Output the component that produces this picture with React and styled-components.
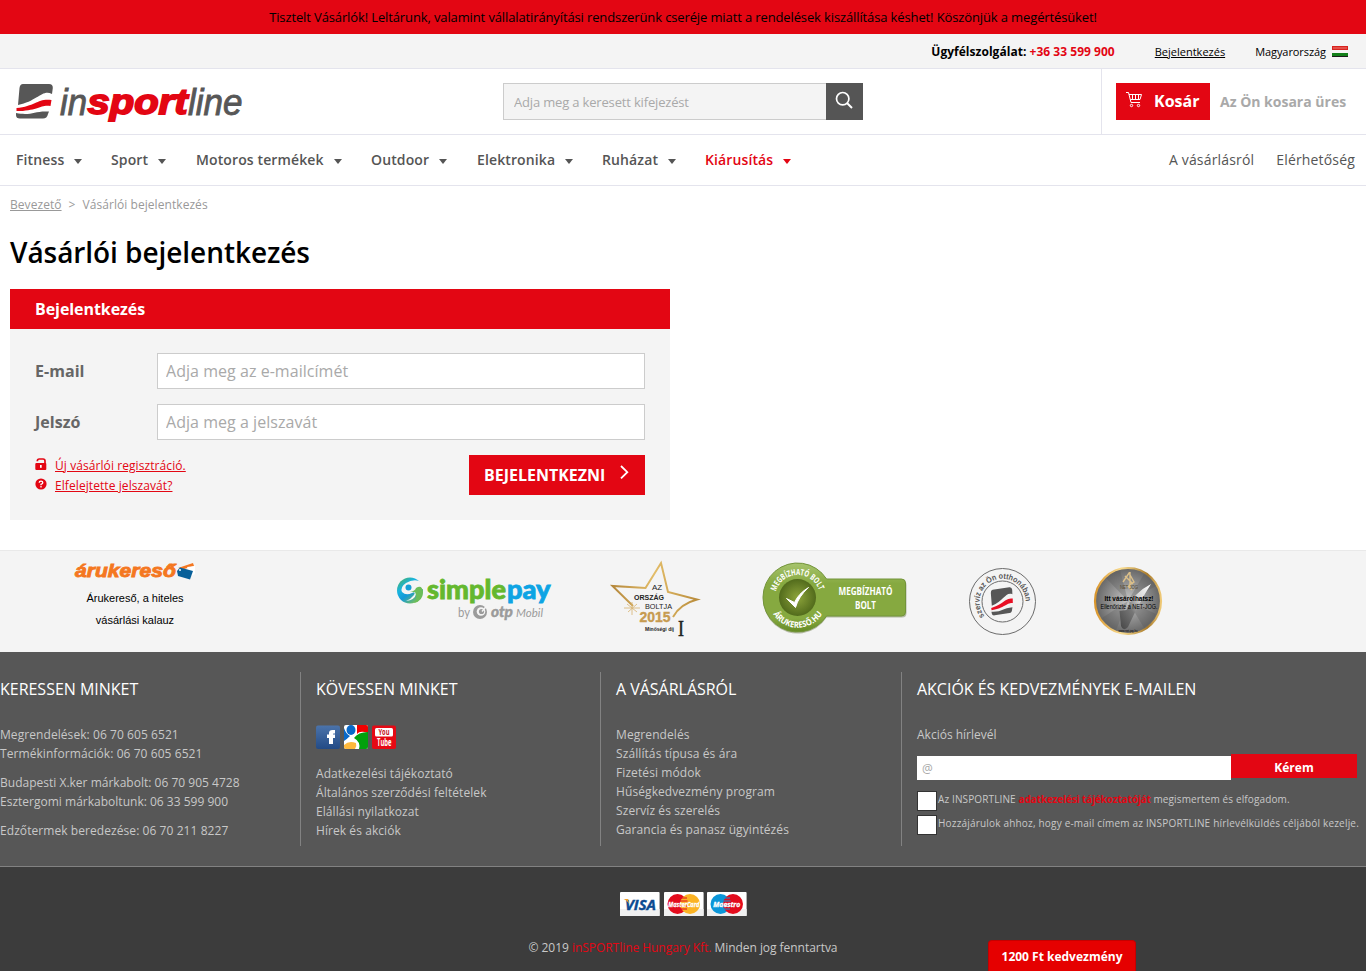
import React from "react";
import styled, { createGlobalStyle } from "styled-components";

const RED = "#e30613";

const Global = createGlobalStyle`
  * { box-sizing: border-box; }
  html, body { margin: 0; padding: 0; }
  body { font-family: "Open Sans", sans-serif; font-size: 12px; color: #000; background: #fff; overflow: hidden; }
  h1, h2, h3, p, ul { margin: 0; padding: 0; font-weight: 400; }
  ul { list-style: none; }
  input { font-family: inherit; border-radius: 0; outline: 0; letter-spacing: inherit; }
  input::placeholder { color: #a9a9a9; opacity: 1; }
  svg { display: block; flex: none; overflow: visible; }
`;

const Page = styled.div`
  position: relative;
  width: 1366px;
  height: 971px;
  overflow: hidden;
  display: flex;
  flex-direction: column;
`;

const Notice = styled.p`
  height: 34px;
  line-height: 34px;
  background: ${RED};
  text-align: center;
  font-size: 13px;
  letter-spacing: -0.122px;
`;

const TopBar = styled.div`
  height: 35px;
  padding-right: 18px;
  display: flex;
  justify-content: flex-end;
  align-items: center;
  background: #f4f4f4;
  border-bottom: 1px solid #e4e4ed;
  font-size: 11px;
`;
const Support = styled.strong`
  font-size: 12px;
  letter-spacing: 0.03px;
  margin-right: 40px;
  span { color: ${RED}; }
`;
const LoginLink = styled.a`
  text-decoration: underline;
  margin-right: 30px;
`;
const Country = styled.span`
  display: flex;
  align-items: center;
  gap: 6px;
  letter-spacing: -0.07px;
`;

const Header = styled.header`
  height: 66px;
  display: flex;
  border-bottom: 1px solid #e4e4ed;
`;
const LogoBox = styled.a`
  width: 503px;
  padding: 13px 0 0 16px;
`;
const Search = styled.form`
  display: flex;
  width: 360px;
  height: 37px;
  margin-top: 14px;
  letter-spacing: -0.17px;
`;
const SearchInput = styled.input`
  flex: 1;
  min-width: 0;
  padding: 0 10px;
  border: 1px solid #ccc;
  border-right: 0;
  background: #f4f4f4;
  font-size: 13px;
`;
const SearchButton = styled.span`
  width: 37px;
  padding: 8px 0 0 9px;
  background: #555;
`;
const CartArea = styled.div`
  width: 265px;
  margin-left: auto;
  padding: 14px 0 0 14px;
  display: flex;
  border-left: 1px solid #e4e4ed;
`;
const CartButton = styled.a`
  width: 94px;
  height: 37px;
  padding-left: 10px;
  display: flex;
  gap: 11px;
  background: ${RED};
  color: #fff;
  font-size: 16px;
  font-weight: 700;
  line-height: 36px;
  svg { margin-top: 8px; }
`;
const CartState = styled.strong`
  margin-left: 10px;
  color: #a9a9a9;
  font-size: 14px;
  line-height: 37px;
`;

const Nav = styled.nav`
  height: 51px;
  padding: 0 11px 2px 16px;
  display: flex;
  align-items: center;
  border-bottom: 1px solid #e4e4ed;
  font-size: 14px;
`;
const NavItem = styled.a`
  width: ${(p) => p.$w}px;
  display: flex;
  align-items: center;
  gap: 10px;
  color: ${(p) => (p.$hot ? RED : "#555")};
  font-weight: 600;
  letter-spacing: 0.12px;
  white-space: nowrap;
  &::after {
    content: "";
    margin-top: 4px;
    border: 4px solid transparent;
    border-top: 5px solid currentColor;
    border-bottom: 0;
  }
`;
const NavSide = styled.div`
  margin-left: auto;
  display: flex;
  gap: 22px;
  color: #555;
  letter-spacing: 0.17px;
`;

const Main = styled.main`
  height: 364px;
  padding: 0 10px;
`;
const Crumbs = styled.div`
  height: 38px;
  line-height: 38px;
  color: #999;
  letter-spacing: 0.06px;
  a { text-decoration: underline; }
  span { margin: 0 7px; }
`;
const Title = styled.h1`
  height: 65px;
  line-height: 56px;
  font-size: 28px;
  font-weight: 600;
  letter-spacing: -0.06px;
`;
const Panel = styled.section`
  width: 660px;
  height: 231px;
  background: #f4f4f4;
`;
const PanelHead = styled.h2`
  height: 40px;
  padding-left: 25px;
  line-height: 40px;
  background: ${RED};
  color: #fff;
  font-size: 16px;
  font-weight: 700;
  letter-spacing: -0.06px;
`;
const PanelBody = styled.div`
  padding: 24px 25px 0;
  display: flex;
  flex-direction: column;
  gap: 15px;
`;
const Field = styled.label`
  display: flex;
  align-items: center;
  height: 36px;
  color: #666;
  font-size: 16px;
  font-weight: 700;
  letter-spacing: 0.04px;
  span { width: 122px; }
`;
const TextInput = styled.input`
  flex: 1;
  height: 36px;
  padding: 0 8px;
  border: 1px solid #ccc;
  background: #fff;
  font-size: 16px;
`;
const Actions = styled.div`
  display: flex;
  justify-content: space-between;
`;
const HelpLinks = styled.ul`
  letter-spacing: 0.08px;
  li { display: flex; gap: 8px; height: 20px; line-height: 21px; color: ${RED}; }
  svg { margin-top: 2.5px; }
  a { text-decoration: underline; }
`;
const Submit = styled.a`
  width: 176px;
  height: 40px;
  padding-left: 15px;
  display: flex;
  gap: 15px;
  background: ${RED};
  color: #fff;
  font-size: 16px;
  font-weight: 700;
  line-height: 40px;
  svg { margin-top: 10px; }
`;

const Trust = styled.section`
  height: 102px;
  display: flex;
  background: #f4f4f4;
  border-top: 1px solid #e9e9e9;
`;
const Slot = styled.div`
  width: ${(p) => p.$w}px;
  padding: ${(p) => p.$top}px 0 0 ${(p) => p.$left || 0}px;
`;
const Guide = styled.p`
  width: 120px;
  margin-top: 6px;
  text-align: center;
  font: 11px/22px "Liberation Sans", sans-serif;
`;

const Footer = styled.footer`
  height: 215px;
  padding-top: 20px;
  display: flex;
  background: #575757;
  border-bottom: 1px solid #828282;
  color: #c8c8c8;
`;
const Column = styled.section`
  width: ${(p) => p.$w}px;
  height: 174px;
  padding-left: ${(p) => (p.$first ? 0 : 15)}px;
  border-left: ${(p) => (p.$first ? "0" : "1px solid #828282")};
  line-height: 19px;
`;
const ColumnTitle = styled.h3`
  height: 53px;
  line-height: 34px;
  color: #fff;
  font-size: 16px;
  letter-spacing: -0.02px;
`;
const Lines = styled.p`
  margin-bottom: 10px;
  white-space: pre-line;
  letter-spacing: ${(p) => p.$track ?? 0.07}px;
`;
const Social = styled.div`
  display: flex;
  gap: 4px;
  margin-bottom: 15px;
`;
const Subscribe = styled.form`
  display: flex;
  height: 26px;
  margin: 10px 0 11px;
`;
const MailInput = styled.input`
  width: 314px;
  height: 24px;
  margin-top: 2px;
  padding: 0 5px;
  border: 0;
  font-size: 12px;
`;
const MailButton = styled.b`
  width: 126px;
  height: 24px;
  line-height: 27px;
  background: ${RED};
  color: #fff;
  text-align: center;
`;
const Consent = styled.label`
  display: flex;
  gap: 1px;
  height: 24px;
  font-size: 10px;
  line-height: 17px;
  letter-spacing: ${(p) => p.$track}px;
  white-space: nowrap;
  b { color: ${RED}; letter-spacing: -0.15px; }
`;
const Box = styled.i`
  width: 20px;
  height: 20px;
  background: #fff;
  border: 1px solid #333;
`;

const Bottom = styled.div`
  flex: 1;
  padding-top: 25px;
  display: flex;
  flex-direction: column;
  align-items: center;
  gap: 22px;
  background: #3c3c3c;
  color: #c8c8c8;
`;
const Cards = styled.div`
  display: flex;
  gap: 4px;
  padding-left: 1px;
`;
const Copyright = styled.p`
  line-height: 20px;
  letter-spacing: -0.04px;
  span { color: ${RED}; }
`;
const Coupon = styled.b`
  position: absolute;
  left: 988px;
  bottom: 0;
  width: 148px;
  height: 31px;
  line-height: 31px;
  border: 1px solid #c40000;
  border-bottom: 0;
  border-radius: 4px 4px 0 0;
  background: #e50000;
  color: #fff;
  text-align: center;
`;

const Wave = ({ accent = RED }) => (
  <g>
    <path d="M7 0H33Q37 0 36.800 4L36 10C26 5 22 17 2 21L3.500 4Q4 0 7 0Z" fill="#575757" />
    <path d="M.500 24C20 22 22 14 35.500 16L34.500 22C25 20 22 27 .500 27Z" fill={accent} />
    <path d="M0 29C16 32 18 26.500 33 27.500L32 30Q31 34.500 27 34.500H4Q0 34.500 0 31Z" fill="#575757" />
  </g>
);

const Logo = () => (
  <svg width="230" height="42" fontFamily="Liberation Sans, sans-serif" fontSize="36.5" fontStyle="italic">
    <g transform="translate(0 2)"><Wave /></g>
    <text x="44" y="32.600" fill="#575757" stroke="#575757" strokeWidth=".9" textLength="27" lengthAdjust="spacingAndGlyphs">in</text>
    <text x="71.500" y="32.300" fill={RED} stroke={RED} strokeWidth="1.8" fontWeight="700" fontSize="35.500" textLength="100" lengthAdjust="spacingAndGlyphs">sport</text>
    <text x="172" y="32.600" fill="#575757" stroke="#575757" strokeWidth=".9" textLength="54.500" lengthAdjust="spacingAndGlyphs">line</text>
  </svg>
);

const Flag = () => (
  <svg width="16" height="11">
    <rect width="16" height="11" fill="#f5f5f5" />
    <rect width="16" height="4" fill="#d8231f" />
    <rect x="1" y="1" width="14" height="2" fill="#e4504a" />
    <rect y="7" width="16" height="4" fill="#14801a" />
    <rect y="10" width="16" height="1" fill="#1c1c1c" />
  </svg>
);

const SearchIcon = () => (
  <svg width="18" height="18" fill="none" stroke="#fff" strokeWidth="1.7">
    <circle cx="7.7" cy="7.7" r="6.2" />
    <path d="M12 12L17 17" strokeWidth="2" />
  </svg>
);

const CartIcon = () => (
  <svg width="17" height="17" fill="none" stroke="#fff" strokeWidth="1">
    <path d="M0 1.500H2.500L5 11.500H14M3 3.500H15.500L14 8.500H4.500M6.500 3.500V8.500M9.500 3.500V8.500M12.500 3.500V8.500" />
    <circle cx="5.500" cy="14.500" r="1.200" />
    <circle cx="12.500" cy="14.500" r="1.200" />
  </svg>
);

const LockIcon = () => (
  <svg width="12" height="13">
    <path d="M2.300 3.200Q2.300 1 4.300 1H8Q10 1 10 3V6" fill="none" stroke={RED} strokeWidth="1.700" />
    <rect x=".300" y="5" width="11" height="7" rx="1" fill={RED} />
    <rect x="5" y="7" width="1.700" height="2.800" fill="#fff" />
  </svg>
);
const HelpIcon = () => (
  <svg width="12" height="13">
    <circle cx="6" cy="6" r="5.600" fill={RED} />
    <path d="M4.200 4.800Q4.200 3.100 6 3.100T7.800 4.700Q7.800 5.700 6 6.300V7.200M6 8.100V9.400" fill="none" stroke="#fff" strokeWidth="1.300" />
  </svg>
);
const ChevronIcon = () => (
  <svg width="9" height="15" fill="none" stroke="#fff" strokeWidth="1.800">
    <path d="M1 1L7.300 7.200L1 13.400" />
  </svg>
);

const Arukereso = () => (
  <svg width="122" height="21">
    <text x="0" y="16.500" fill="#f47721" stroke="#f47721" strokeWidth=".9" fontFamily="Liberation Sans, sans-serif" fontSize="19" fontWeight="700" fontStyle="italic" textLength="101" lengthAdjust="spacingAndGlyphs">árukereső</text>
    <path d="M103 8L118 3L119 6L109 9Z" fill="#f47721" />
    <path d="M112 7L120 6L120 14L116 16Z" fill="#fff" />
    <path d="M105 7.500L118 11L115 19.500L103 16L102 11Z" fill="#075f99" />
    <circle cx="105" cy="10" r="1" fill="#fff" />
  </svg>
);

const SimplePay = () => (
  <svg width="156" height="46" fontFamily="Lato, sans-serif">
    <defs>
      <linearGradient id="sp" x1="0" y1="0" x2=".8" y2="1">
        <stop offset="0" stopColor="#55ad45" />
        <stop offset=".35" stopColor="#19b5df" />
        <stop offset=".6" stopColor="#1299d8" />
        <stop offset="1" stopColor="#8cc63f" />
      </linearGradient>
    </defs>
    <circle cx="14" cy="13.500" r="13" fill="url(#sp)" />
    <path d="M26 5Q18 1 10 6Q4 10 6 15Q10 19 16 16Q20 14 18 18Q15 22 10 24Q19 23 20 17Q21 12 28 12Z" fill="#f4f4f4" />
    <path d="M14 15Q19 14 20 11Q26 7 27 15Q27 24 18 26Q22 21 19 15Z" fill="#6cbd58" />
    <circle cx="12.500" cy="10.500" r="3" fill="#159fd6" />
    <g strokeWidth=".8" fontSize="26.500" fontWeight="900">
      <text x="31" y="21.500" fill="#64b82e" stroke="#64b82e" textLength="79" lengthAdjust="spacingAndGlyphs">simple</text>
      <text x="111" y="21.500" fill="#0da4e4" stroke="#0da4e4" textLength="43.500" lengthAdjust="spacingAndGlyphs">pay</text>
    </g>
    <g fill="#9b9b9b">
      <text x="62" y="39.500" fontSize="12.500" textLength="12" lengthAdjust="spacingAndGlyphs">by</text>
      <circle cx="84" cy="35" r="7" />
      <circle cx="85" cy="34.500" r="4.300" fill="#f4f4f4" />
      <circle cx="85.500" cy="34.500" r="2.600" />
      <path d="M86 34.500L91 28.500" stroke="#f4f4f4" strokeWidth="1.500" />
      <text x="95" y="39.500" fontSize="15" fontWeight="900" fontStyle="italic" stroke="#9b9b9b" strokeWidth=".4" textLength="22" lengthAdjust="spacingAndGlyphs">otp</text>
      <text x="120" y="39.500" fontSize="11.500" fontStyle="italic" textLength="27" lengthAdjust="spacingAndGlyphs">Mobil</text>
    </g>
  </svg>
);

const StarAward = () => (
  <svg width="92" height="78" fontFamily="Liberation Sans, sans-serif" textAnchor="middle">
    <defs>
      <linearGradient id="gold"><stop offset="0" stopColor="#b5883c" /><stop offset=".5" stopColor="#e3bd69" /><stop offset="1" stopColor="#b98c3b" /></linearGradient>
    </defs>
    <path d="M23 46L2.500 26L35.500 28L51 3L58 32L87 39.500Q70 44 63 57" fill="none" stroke="url(#gold)" strokeWidth="2" />
    <path d="M17 44L27 52M18 52L27 44M22 42L22 55M14 48L30 48" stroke="#d7b36e" strokeWidth=".8" />
    <g fill="#222">
      <text x="47" y="30" fontSize="8">AZ</text>
      <text x="39" y="40" fontSize="7.800" fontWeight="700" textLength="30" lengthAdjust="spacingAndGlyphs">ORSZÁG</text>
      <text x="48.500" y="48.500" fontSize="7.800" textLength="27" lengthAdjust="spacingAndGlyphs">BOLTJA</text>
      <text x="45" y="62" fontSize="15" fontWeight="700" fill="#c79b50" stroke="#c79b50" strokeWidth=".4" textLength="31" lengthAdjust="spacingAndGlyphs">2015</text>
      <text x="49.500" y="70.500" fontSize="6" fontWeight="700" textLength="29" lengthAdjust="spacingAndGlyphs">Minőségi díj</text>
      <text x="71" y="76" fontFamily="Liberation Serif, serif" fontSize="23" stroke="#222" strokeWidth=".5" textLength="6" lengthAdjust="spacingAndGlyphs">I</text>
    </g>
  </svg>
);

const TrustedShop = () => (
  <svg width="150" height="78" fontFamily="Open Sans, sans-serif" fontWeight="700" fill="#fff">
    <defs>
      <linearGradient id="green" x1="0" y1="0" x2="0" y2="1"><stop offset="0" stopColor="#a7c46d" /><stop offset=".3" stopColor="#86a940" /><stop offset=".8" stopColor="#86a940" /><stop offset="1" stopColor="#638923" /></linearGradient>
      <radialGradient id="olive"><stop offset="0" stopColor="#8da43b" /><stop offset="1" stopColor="#526b1c" /></radialGradient>
      <path id="ringTop" d="M15 31.400A22.500 22.500 0 0 1 58.500 32" />
      <path id="ringBottom" d="M12 54A29 29 0 0 0 63 51" />
    </defs>
    <path d="M65.600 20.500H141Q145.500 20.500 145.500 25V53Q145.500 57.500 141 57.500H65.600A34.500 34.500 0 1 1 65.600 20.500Z" fill="#8b956f" opacity=".6" />
    <path d="M65.600 19H140.500Q144.500 19 144.500 23V52Q144.500 56 140.500 56H65.600A34.500 34.500 0 1 1 65.600 19Z" fill="url(#green)" stroke="#73943a" />
    <circle cx="36.500" cy="37.500" r="18.500" fill="url(#olive)" />
    <path d="M25.500 38.500L33.500 42.500Q37.500 33.500 47.500 27.500Q37.500 36.500 34.500 47.500Z" stroke="#fff" />
    <text fontSize="8.500"><textPath href="#ringTop" textLength="57" lengthAdjust="spacingAndGlyphs">MEGBÍZHATÓ BOLT</textPath></text>
    <text fontSize="8.500"><textPath href="#ringBottom" textLength="59" lengthAdjust="spacingAndGlyphs">ÁRUKERESŐ.HU</textPath></text>
    <text x="77.500" y="34.500" fontSize="10.500" textLength="54" lengthAdjust="spacingAndGlyphs">MEGBÍZHATÓ</text>
    <text x="94" y="49" fontSize="10.500" textLength="21" lengthAdjust="spacingAndGlyphs">BOLT</text>
  </svg>
);

const HomeService = () => (
  <svg width="70" height="70" fontFamily="Liberation Sans, sans-serif">
    <defs><path id="serviceRing" d="M16.500 49A23 23 0 1 1 57.500 35.500" /></defs>
    <g fill="none" stroke="#6b6b6b"><circle cx="34.500" cy="34.500" r="33" /><circle cx="34.500" cy="34.500" r="20.500" /></g>
    <g transform="translate(22 21.500) rotate(-9 12 13) scale(.65 .74)"><Wave accent="#e80f24" /></g>
    <text fontSize="8" fontWeight="700" fill="#575757"><textPath href="#serviceRing" textLength="87" lengthAdjust="spacingAndGlyphs">szervíz az Ön otthonában</textPath></text>
  </svg>
);

const NetJog = () => (
  <svg width="70" height="71" fontFamily="Liberation Sans, sans-serif" textAnchor="middle">
    <defs>
      <radialGradient id="steel"><stop offset="0" stopColor="#c7c7c7" /><stop offset="1" stopColor="#666" /></radialGradient>
      <linearGradient id="rim"><stop offset="0" stopColor="#d9952b" /><stop offset=".4" stopColor="#f9dc90" /><stop offset=".8" stopColor="#a97b2b" /><stop offset="1" stopColor="#efc977" /></linearGradient>
      <linearGradient id="tick" x1="0" y1="1" x2="1" y2="0"><stop offset="0" stopColor="#444" /><stop offset=".4" stopColor="#777" /><stop offset=".65" stopColor="#d5d5d5" /><stop offset="1" stopColor="#fff" /></linearGradient>
    </defs>
    <circle cx="34" cy="35" r="33" fill="url(#steel)" stroke="url(#rim)" strokeWidth="2.200" />
    <path d="M34 35L12 12A32 32 0 0 1 26 4ZM34 35L50 8A32 32 0 0 1 62 20ZM34 35L8 52A32 32 0 0 0 22 64ZM34 35L62 48A32 32 0 0 1 50 62Z" fill="#555" opacity=".3" />
    <path d="M25.500 45L32.500 44Q39 27 57 18Q46 35 34 61Q29 66 27 60Z" fill="url(#tick)" />
    <path d="M29 16L35 7L40 16L34 20L38 24M31 10L39 18M36 6V22" fill="none" stroke="#dcc08a" strokeWidth="1.400" />
    <text x="35" y="22.500" fontSize="6" fill="#54482e" textLength="18" lengthAdjust="spacingAndGlyphs">NET JOG</text>
    <text x="35" y="35" fontSize="7.800" fontWeight="700" textLength="49" lengthAdjust="spacingAndGlyphs">Itt vásárolhatsz!</text>
    <text x="35" y="43" fontSize="6.800" textLength="57" lengthAdjust="spacingAndGlyphs">Ellenőrizte a NET-JOG.</text>
    <text x="34" y="66" fontSize="3.500" textLength="19" lengthAdjust="spacingAndGlyphs">www.net-jog.hu</text>
  </svg>
);

const Facebook = () => (
  <svg width="24" height="24">
    <defs><linearGradient id="fb" x1="0" y1="0" x2="0" y2="1"><stop offset="0" stopColor="#4b73aa" /><stop offset="1" stopColor="#234b86" /></linearGradient></defs>
    <rect y=".5" width="24" height="23.500" rx="2" fill="url(#fb)" />
    <path d="M13 19V13H11V9.500H13V8Q13 5 16.500 5H19V8.500H17.500Q17 8.500 17 9.500H19V13H17V19Z" fill="#fff" />
  </svg>
);
const Google = () => (
  <svg width="24" height="24">
    <defs><clipPath id="gclip"><rect width="24" height="24" rx="2" /></clipPath></defs>
    <g clipPath="url(#gclip)">
      <rect width="24" height="24" fill="#fff" />
      <path d="M13 0H24V8Q16 5 13 9Z" fill="#f10000" />
      <path d="M10 13Q14 7 24 7V24H15Q17 17 10 13Z" fill="#02a10c" />
      <path d="M0 3Q2 9 6 11Q3 14 0 16Z" fill="#0869c9" />
      <ellipse cx="7" cy="5" rx="4.500" ry="5" fill="#0869c9" />
      <path d="M0 20Q5 15 12 18Q13 21 11 24H0Z" fill="#ffb93b" />
    </g>
  </svg>
);
const YouTube = () => (
  <svg width="24" height="24" fontFamily="Open Sans, sans-serif" fontWeight="700">
    <rect y=".5" width="24" height="23.500" rx="2" fill="#e50914" />
    <rect x="3" y="3" width="18" height="8.500" rx="1.500" fill="#fff" />
    <text x="6.500" y="10.300" fontSize="8.500" fill="#c5101b" textLength="11" lengthAdjust="spacingAndGlyphs">You</text>
    <text x="5" y="21" fontSize="10" fill="#fff" textLength="14.500" lengthAdjust="spacingAndGlyphs">Tube</text>
  </svg>
);

const Card = ({ children }) => (
  <svg width="39.600" height="24" fontFamily="Open Sans, sans-serif" fontWeight="700" fontStyle="italic" textAnchor="middle">
    <rect width="39.600" height="24" rx="1" fill="#fff" />
    <rect y="17" width="39.600" height="7" fill="#f0f0f0" />
    {children}
  </svg>
);
const Circles = ({ left, right, label }) => (
  <Card>
    <circle cx="13.500" cy="12" r="10" fill={left} />
    <circle cx="26" cy="12" r="10" fill={right} />
    <path d="M17 6H23M16.500 9H23.500M16 14H23.500M17 17H23" stroke={left} strokeWidth="1" />
    <text x="19.800" y="14.700" fontSize="7.500" fill="#fff" stroke="#fff" strokeWidth=".3" textLength={label.length > 8 ? 31 : 27} lengthAdjust="spacingAndGlyphs">{label}</text>
  </Card>
);

const menu = [
  ["Fitness", 95], ["Sport", 85], ["Motoros termékek", 175], ["Outdoor", 106],
  ["Elektronika", 125], ["Ruházat", 103], ["Kiárusítás", 100, true],
];

export default function App() {
  return (
    <Page>
      <Global />
      <Notice>Tisztelt Vásárlók! Leltárunk, valamint vállalatirányítási rendszerünk cseréje miatt a rendelések kiszállítása késhet! Köszönjük a megértésüket!</Notice>
      <TopBar>
        <Support>Ügyfélszolgálat: <span>+36 33 599 900</span></Support>
        <LoginLink>Bejelentkezés</LoginLink>
        <Country>Magyarország <Flag /></Country>
      </TopBar>
      <Header>
        <LogoBox><Logo /></LogoBox>
        <Search>
          <SearchInput placeholder="Adja meg a keresett kifejezést" />
          <SearchButton><SearchIcon /></SearchButton>
        </Search>
        <CartArea>
          <CartButton><CartIcon />Kosár</CartButton>
          <CartState>Az Ön kosara üres</CartState>
        </CartArea>
      </Header>
      <Nav>
        {menu.map(([name, w, hot]) => <NavItem key={name} $w={w} $hot={hot}>{name}</NavItem>)}
        <NavSide><a>A vásárlásról</a><a>Elérhetőség</a></NavSide>
      </Nav>
      <Main>
        <Crumbs><a>Bevezető</a><span>&gt;</span>Vásárlói bejelentkezés</Crumbs>
        <Title>Vásárlói bejelentkezés</Title>
        <Panel>
          <PanelHead>Bejelentkezés</PanelHead>
          <PanelBody>
            <Field><span>E-mail</span><TextInput placeholder="Adja meg az e-mailcímét" /></Field>
            <Field><span>Jelszó</span><TextInput placeholder="Adja meg a jelszavát" /></Field>
            <Actions>
              <HelpLinks>
                <li><LockIcon /><a>Új vásárlói regisztráció.</a></li>
                <li><HelpIcon /><a>Elfelejtette jelszavát?</a></li>
              </HelpLinks>
              <Submit>BEJELENTKEZNI<ChevronIcon /></Submit>
            </Actions>
          </PanelBody>
        </Panel>
      </Main>
      <Trust>
        <Slot $w={396} $top={9} $left={75}>
          <Arukereso />
          <Guide>Árukereső, a hiteles<br />vásárlási kalauz</Guide>
        </Slot>
        <Slot $w={214} $top={26}><SimplePay /></Slot>
        <Slot $w={151} $top={9}><StarAward /></Slot>
        <Slot $w={207} $top={9}><TrustedShop /></Slot>
        <Slot $w={126} $top={16}><HomeService /></Slot>
        <Slot $w={90} $top={15}><NetJog /></Slot>
      </Trust>
      <Footer>
        <Column $w={300} $first>
          <ColumnTitle>KERESSEN MINKET</ColumnTitle>
          <Lines>{"Megrendelések: 06 70 605 6521\nTermékinformációk: 06 70 605 6521"}</Lines>
          <Lines $track={0.01}>{"Budapesti X.ker márkabolt: 06 70 905 4728\nEsztergomi márkaboltunk: 06 33 599 900"}</Lines>
          <Lines>Edzőtermek beredezése: 06 70 211 8227</Lines>
        </Column>
        <Column $w={300}>
          <ColumnTitle>KÖVESSEN MINKET</ColumnTitle>
          <Social><Facebook /><Google /><YouTube /></Social>
          <Lines>{"Adatkezelési tájékoztató\nÁltalános szerződési feltételek\nElállási nyilatkozat\nHírek és akciók"}</Lines>
        </Column>
        <Column $w={301}>
          <ColumnTitle>A VÁSÁRLÁSRÓL</ColumnTitle>
          <Lines $track={0.09}>{"Megrendelés\nSzállítás típusa és ára\nFizetési módok\nHűségkedvezmény program\nSzervíz és szerelés\nGarancia és panasz ügyintézés"}</Lines>
        </Column>
        <Column $w={465}>
          <ColumnTitle>AKCIÓK ÉS KEDVEZMÉNYEK E-MAILEN</ColumnTitle>
          <p>Akciós hírlevél</p>
          <Subscribe><MailInput placeholder="@" /><MailButton>Kérem</MailButton></Subscribe>
          <Consent $track={0.13}><Box /><span>Az INSPORTLINE <b>adatkezelési tájékoztatóját</b> megismertem és elfogadom.</span></Consent>
          <Consent $track={0.19}><Box /><span>Hozzájárulok ahhoz, hogy e-mail címem az INSPORTLINE hírlevélküldés céljából kezelje.</span></Consent>
        </Column>
      </Footer>
      <Bottom>
        <Cards>
          <Card>
            <text x="20.500" y="17.500" fontSize="14.500" fill="#0b4a91" stroke="#0b4a91" strokeWidth=".4" textLength="31" lengthAdjust="spacingAndGlyphs">VISA</text>
            <path d="M3.500 7H8L9 12Q7 8 3.500 7Z" fill="#f3a127" />
          </Card>
          <Circles left="#e30b1c" right="#fbb324" label="MasterCard" />
          <Circles left="#0b96d8" right="#e30b1c" label="Maestro" />
        </Cards>
        <Copyright>© 2019 <span>inSPORTline Hungary Kft.</span> Minden jog fenntartva</Copyright>
      </Bottom>
      <Coupon>1200 Ft kedvezmény</Coupon>
    </Page>
  );
}
